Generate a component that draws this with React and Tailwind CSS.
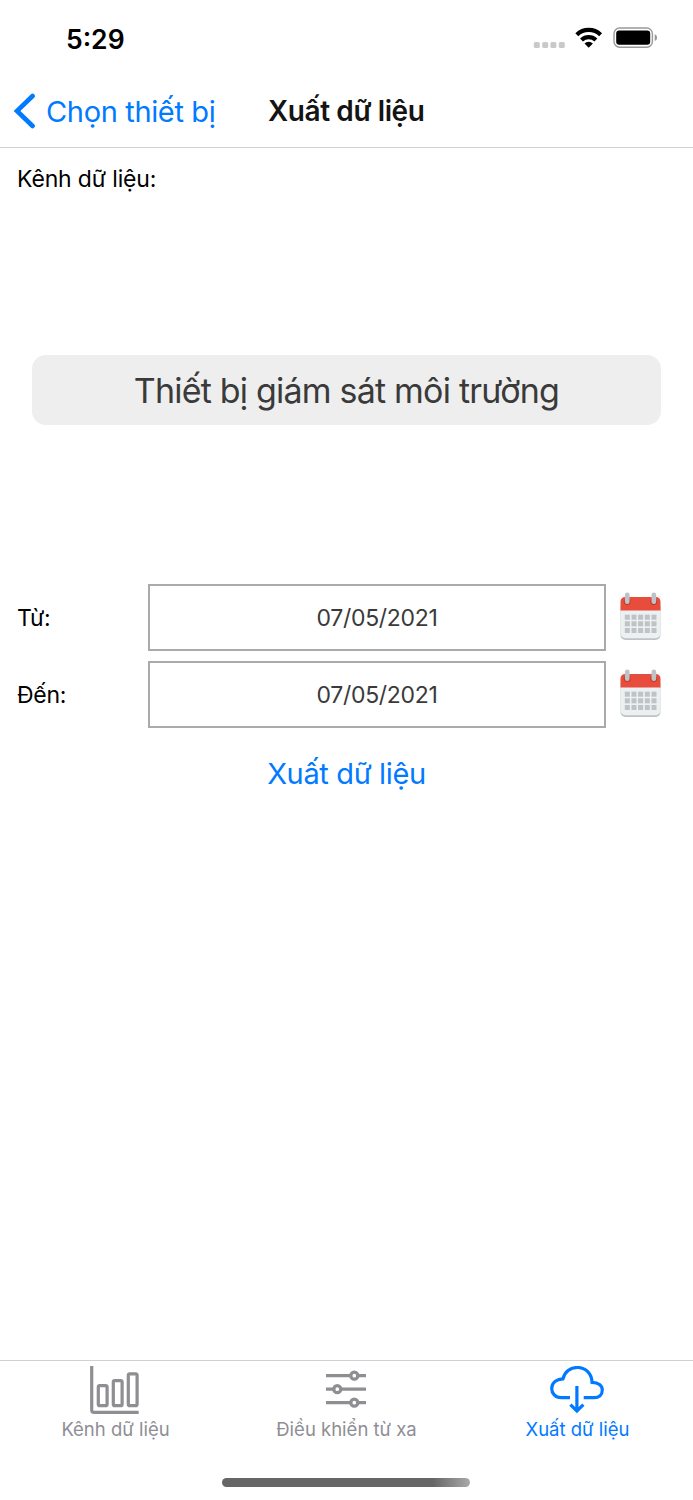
import clsx from "clsx";

function StatusBar() {
  return (
    <header className="flex h-[74px] items-start justify-between pr-9 pl-[66px]">
      <span className="mt-[21px] text-[26.5px] leading-9 font-semibold text-black">
        5:29
      </span>
      <svg className="mt-[24px] h-7 w-[124px]" viewBox="533 24 124 28" fill="none">
        <g fill="#c9c9cb">
          <rect x="533.8" y="42" width="6" height="6" rx="1.6" />
          <rect x="542.2" y="42" width="6" height="6" rx="1.6" />
          <rect x="550.4" y="42" width="6" height="6" rx="1.6" />
          <rect x="558.8" y="42" width="6" height="6" rx="1.6" />
        </g>
        <g stroke="#000" strokeWidth="4.2">
          <path d="M576.8 34.7a17.2 17.2 0 0 1 23.800 0" />
          <path d="M581.500 40a10.500 10.500 0 0 1 14.400 0" />
        </g>
        <path d="M588.700 47.800l-4.200-4.300a6.200 6.200 0 0 1 8.400 0z" fill="#000" />
        <rect x="614" y="28" width="38.4" height="19.2" rx="5.6" stroke="#999" strokeWidth="1.4" />
        <rect x="616.2" y="30.6" width="34" height="14.2" rx="3" fill="#000" />
        <path d="M654.700 34.300c3.200 1.400 3.200 5.300 0 6.700z" fill="#999" />
      </svg>
    </header>
  );
}

function NavBar() {
  return (
    <nav className="flex h-[74px] items-center border-b border-[#d0d0d2]">
      <button className="flex w-[268px] items-center pl-[13px] text-[#007aff]">
        <svg className="h-[36px] w-[22px]" viewBox="0 0 22 36" fill="none">
          <path d="M19.600 3L4 18l15.600 15" stroke="currentColor" strokeWidth="4.600" strokeLinecap="round" />
        </svg>
        <span className="mt-0.5 ml-[11px] text-[29px] leading-9 tracking-[-0.35px] whitespace-nowrap">
          Chọn thiết bị
        </span>
      </button>
      <h1 className="text-[28px] leading-9 font-semibold tracking-[-0.4px] whitespace-nowrap text-[#141414]">
        Xuất dữ liệu
      </h1>
    </nav>
  );
}

function CalendarIcon() {
  return (
    <svg className="h-12 w-[41px]" viewBox="0 0 41 48">
      <path d="M.5 14h40v29a5 5 0 0 1-5 5h-30a5 5 0 0 1-5-5z" fill="#bdc3c7" />
      <path d="M.5 14h40v27.200a5 5 0 0 1-5 5h-30a5 5 0 0 1-5-5z" fill="#ecf0f1" />
      <path d="M.5 18.500v-9a4.500 4.500 0 0 1 4.500-4.500h31a4.500 4.500 0 0 1 4.500 4.500v9z" fill="#e74c3c" />
      <circle cx="7.200" cy="9.600" r="3.400" fill="#c0392b" />
      <circle cx="33.800" cy="9.600" r="3.400" fill="#c0392b" />
      <rect x="4.900" y=".5" width="4.700" height="11.500" rx="2.300" fill="#bdc3c7" />
      <rect x="31.500" y=".5" width="4.700" height="11.500" rx="2.300" fill="#bdc3c7" />
      {[22.7, 29.3, 36].map((y) =>
        [4.8, 11.5, 18.1, 24.8, 31.5].map((x) => (
          <rect key={`${x}-${y}`} x={x} y={y} width="5" height="5" fill="#bdc3c7" />
        ))
      )}
    </svg>
  );
}

function DateRow({ label, value }) {
  return (
    <div className="flex h-[67px] items-center">
      <label className="mt-0.5 w-[131px] text-[23px] tracking-[-0.25px] text-black">{label}</label>
      <div className="flex h-full w-[458px] items-center justify-center border-2 border-[#aaa] pt-0.5 text-[23px] tracking-[-0.3px] text-[#3a3a3a]">
        {value}
      </div>
      <div className="-mt-[3px] ml-3.5">
        <CalendarIcon />
      </div>
    </div>
  );
}

function ChartIcon() {
  return (
    <svg className="h-12 w-[51px]" viewBox="0 0 51 48" fill="none" stroke="currentColor" strokeWidth="3.2">
      <path d="M1.700 0v43.900a2.500 2.500 0 0 0 2.500 2.500H48.700" />
      <rect x="8.300" y="19.600" width="8.800" height="20.100" rx="1.500" />
      <rect x="23.300" y="14.600" width="8.800" height="25.100" rx="1.500" />
      <rect x="38.300" y="7.900" width="8.800" height="31.800" rx="1.500" />
    </svg>
  );
}

function SlidersIcon() {
  return (
    <svg className="h-12 w-[41px]" viewBox="0 0 41 48" fill="none" stroke="currentColor" strokeWidth="3.3">
      <path d="M0 9.700h24.500M32 9.700h8M0 23.200h7.500M15 23.200h25M0 36.700h24.500M32 36.700h8" />
      <circle cx="28.300" cy="9.700" r="3.500" />
      <circle cx="11.300" cy="23.200" r="3.500" />
      <circle cx="28.300" cy="36.700" r="3.500" />
    </svg>
  );
}

function CloudIcon() {
  return (
    <svg className="h-12 w-[55px]" viewBox="0.8 0 55 48" fill="none" stroke="currentColor" strokeWidth="3.200">
      <path d="M20.800 31.700H12C6 31.700 2.500 27.500 2.500 22.500c0-5.500 4.500-9.500 11.300-9.700C15.500 6 21 1.500 28 1.500c8.500 0 14.600 6.200 14.800 14.800 6.500.2 10.300 3.200 10.300 7.800 0 4.800-3.400 7.600-8.100 7.600H34.500" />
      <path d="M27.700 20v25M21.200 38.600l6.500 6.400 6.500-6.400" />
    </svg>
  );
}

const tabs = [
  { label: "Kênh dữ liệu", icon: <ChartIcon /> },
  { label: "Điều khiển từ xa", icon: <SlidersIcon /> },
  { label: "Xuất dữ liệu", icon: <CloudIcon />, active: true },
];

function TabBar() {
  return (
    <footer className="flex h-[140px] flex-col items-center border-t border-[#d0d0d2]">
      <div className="grid w-full grid-cols-3">
        {tabs.map((tab) => (
          <button
            key={tab.label}
            className={clsx(
              "flex flex-col items-center pt-[5px]",
              tab.active ? "text-[#007aff]" : "text-[#8e8e93]"
            )}
          >
            {tab.icon}
            <span className="mt-[3px] text-[18.5px] leading-6 whitespace-nowrap">{tab.label}</span>
          </button>
        ))}
      </div>
      <div className="mt-[37px] mr-px h-[9px] w-[248px] rounded-full bg-linear-to-r from-[#666] from-85% to-[#aaa]" />
    </footer>
  );
}

export default function App() {
  return (
    <div className="flex h-[1500px] w-[693px] flex-col bg-white font-['Inter',sans-serif]">
      <StatusBar />
      <NavBar />
      <main className="flex flex-1 flex-col">
        <p className="mt-[15px] ml-[17px] text-[23px] leading-8 tracking-[-0.15px] text-black">Kênh dữ liệu:</p>
        <div className="mx-8 mt-[160px] flex h-[70px] items-center justify-center rounded-[14px] bg-[#eee] text-[34px] tracking-[-0.8px] text-[#3a3a3a]">
          Thiết bị giám sát môi trường
        </div>
        <div className="mt-[159px] flex flex-col gap-2.5 pl-[17px]">
          <DateRow label="Từ:" value="07/05/2021" />
          <DateRow label="Đến:" value="07/05/2021" />
        </div>
        <button className="mt-[28px] self-center text-[29px] leading-9 tracking-[-0.35px] text-[#007aff]">
          Xuất dữ liệu
        </button>
      </main>
      <TabBar />
    </div>
  );
}
